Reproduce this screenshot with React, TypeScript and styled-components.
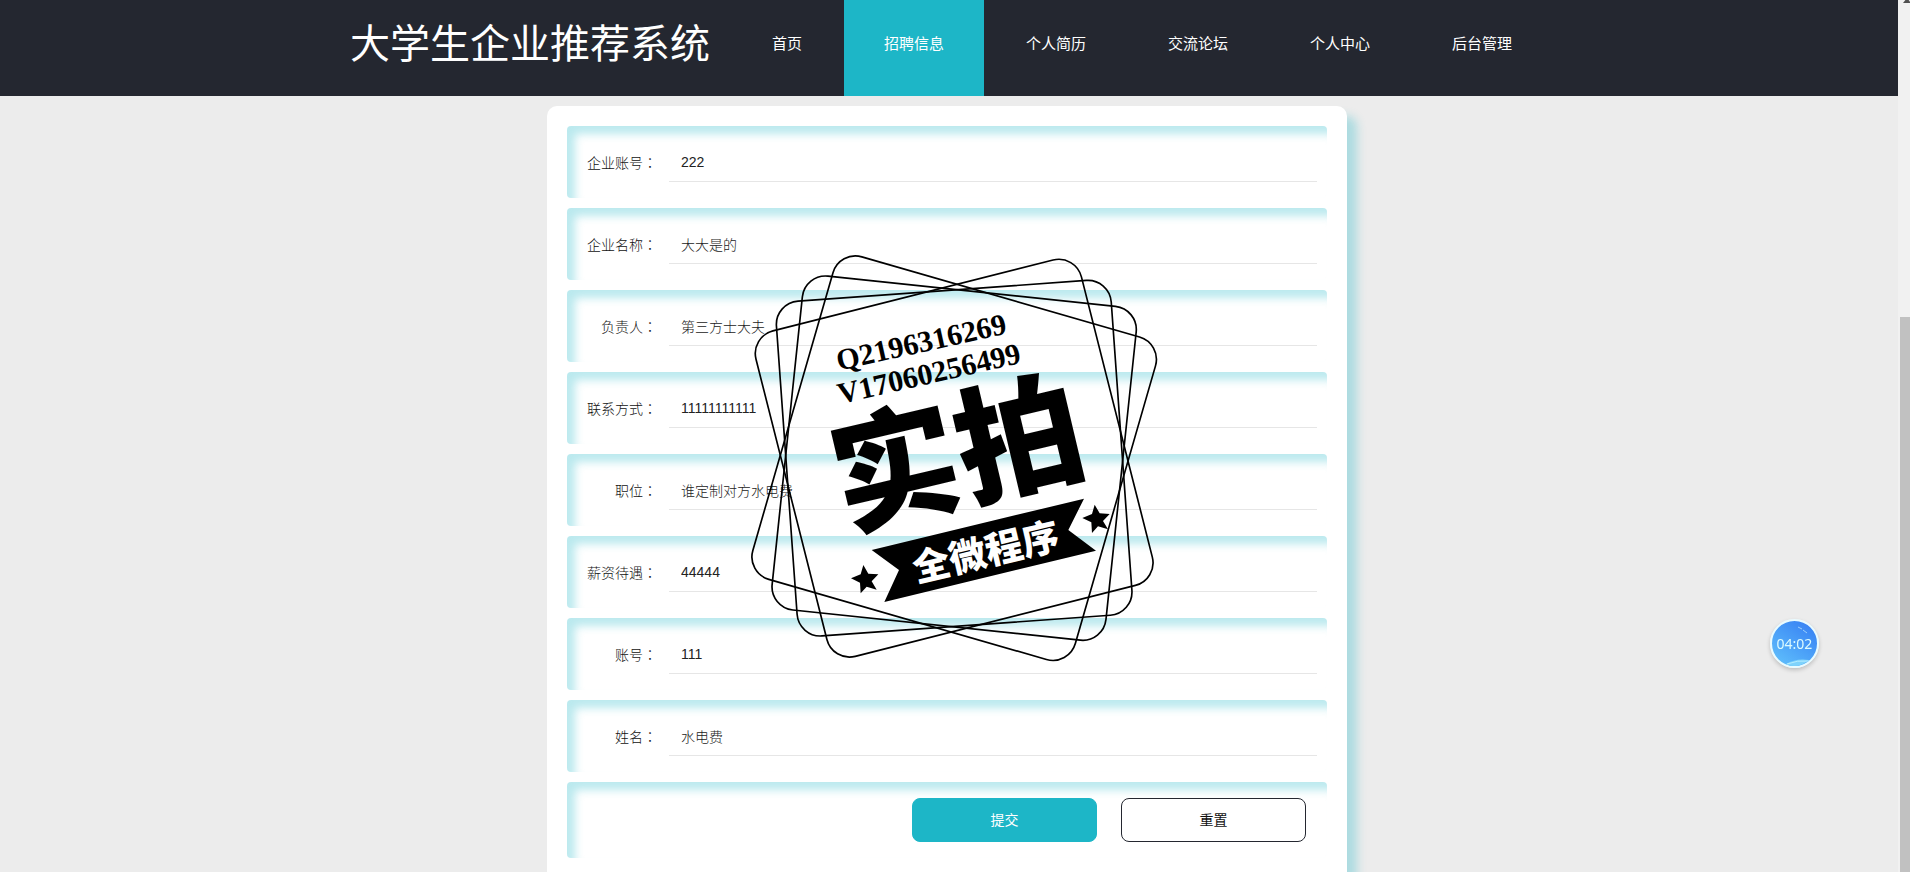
import React from 'react';
import styled, { createGlobalStyle } from 'styled-components';

const teal = '#1db6c7';
const tealShade = 'rgba(29, 182, 199, 0.3)';
const fontStack = '"Liberation Sans", "Noto Sans CJK SC", sans-serif';

const GlobalStyle = createGlobalStyle`
  * { box-sizing: border-box; }
  body {
    margin: 0;
    background: #ececec;
    color: #222;
    font: 14px/20px ${fontStack};
  }
`;

const Page = styled.div`
  display: grid;
  grid-template-columns: minmax(0, 1fr) 12px;
  height: 100vh;
  overflow: hidden;
`;

const Content = styled.div`
  min-width: 0;
`;

const Header = styled.header`
  display: flex;
  justify-content: center;
  height: 96px;
  background: #242730;
`;

const HeaderInner = styled.div`
  display: flex;
  gap: 22px;
  width: 100%;
  max-width: 1198px;
`;

const Title = styled.h1`
  margin: 0;
  color: #fff;
  font-size: 40px;
  font-weight: 400;
  line-height: 88px;
  white-space: nowrap;
`;

const Nav = styled.nav`
  display: flex;
  gap: 2px;
`;

const NavLink = styled.a<{ $active?: boolean }>`
  padding: 0 40px;
  background: ${({ $active }) => ($active ? teal : 'transparent')};
  color: #fff;
  font-size: 15px;
  line-height: 88px;
  text-decoration: none;
  white-space: nowrap;
`;

const Main = styled.main`
  display: flex;
  justify-content: center;
  padding: 10px 4px 40px 0;
`;

const Card = styled.form`
  position: relative;
  display: flex;
  flex-direction: column;
  gap: 10px;
  width: 100%;
  max-width: 800px;
  padding: 20px 20px 40px;
  border-radius: 10px;
  background: #fff;
  box-shadow: 10px 10px 10px ${tealShade};
`;

const Row = styled.div`
  display: flex;
  align-items: center;
  gap: 12px;
  padding: 16px 10px;
  border-radius: 4px;
  box-shadow: inset 8px 8px 8px ${tealShade};
`;

const ButtonRow = styled(Row)`
  justify-content: flex-end;
  gap: 24px;
  padding: 16px 21px;
`;

const Label = styled.label`
  flex: 0 0 80px;
  color: #111;
  font-weight: 300;
  line-height: 18px;
  text-align: right;
`;

const Colon = styled.span`
  font-family: "Noto Sans CJK TC", sans-serif;
`;

const Input = styled.input`
  flex: 1;
  min-width: 0;
  height: 40px;
  padding: 0 12px;
  border: 0;
  border-bottom: 1px solid #e6e6e6;
  outline: 0;
  background: transparent;
  color: #222;
  font: 300 14px/20px ${fontStack};
`;

const Button = styled.button<{ $primary?: boolean }>`
  width: 185px;
  height: 44px;
  border: 1px solid ${({ $primary }) => ($primary ? teal : '#242730')};
  border-radius: 8px;
  background: ${({ $primary }) => ($primary ? teal : '#fff')};
  color: ${({ $primary }) => ($primary ? '#fff' : '#111')};
  font: 14px/20px ${fontStack};
`;

const Stamp = styled.svg`
  position: absolute;
  top: 134px;
  left: 193px;
  width: 430px;
  height: 430px;
  pointer-events: none;
`;

const Timer = styled.div`
  position: fixed;
  right: 91px;
  bottom: 204px;
  display: flex;
  align-items: center;
  justify-content: center;
  width: 49px;
  height: 49px;
  border: 2px solid #e9fbff;
  border-radius: 50%;
  background: linear-gradient(215deg, #3a86f4 15%, #5bb9fb 85%);
  box-shadow: 0 2px 4px rgba(0, 0, 0, 0.2);
  color: #dcfbff;
  font: 14px/20px "Noto Sans", sans-serif;
`;

const Glint = styled.svg`
  position: absolute;
  inset: 0;
  width: 45px;
  height: 45px;
`;

const TimerText = styled.span`
  position: relative;
`;

const ScrollTrack = styled.div`
  display: flex;
  flex-direction: column;
  justify-content: space-between;
  padding-left: 2px;
  background: #f1f1f1;
`;

const ScrollArrow = styled.svg`
  width: 10px;
  height: 4px;
`;

const ScrollThumb = styled.div`
  height: calc(100% - 317px);
  background: #c1c1c1;
`;

const links = ['首页', '招聘信息', '个人简历', '交流论坛', '个人中心', '后台管理'];

const fields = [
  { id: 'account', label: '企业账号', value: '222' },
  { id: 'company', label: '企业名称', value: '大大是的' },
  { id: 'owner', label: '负责人', value: '第三方士大夫' },
  { id: 'contact', label: '联系方式', value: '11111111111' },
  { id: 'position', label: '职位', value: '谁定制对方水电费' },
  { id: 'salary', label: '薪资待遇', value: '44444' },
  { id: 'user', label: '账号', value: '111' },
  { id: 'name', label: '姓名', value: '水电费' },
];

const frameAngles = [16.1, 6, -4.1, -14.2];
const star =
  '-3,-43 12,-17 42,-15 22,6 37,31 7,22 -11,42 -13,10 -40,-3 -11,-15';

function StampMark() {
  return (
    <Stamp viewBox="0 0 1290 1290" aria-hidden="true">
      {frameAngles.map((angle) => (
        <rect
          key={angle}
          x="139"
          y="151"
          width="1007"
          height="1007"
          rx="70"
          fill="none"
          stroke="#000"
          strokeWidth="5"
          transform={`rotate(${angle} 642.5 654.5)`}
        />
      ))}
      <g fontFamily='"Liberation Serif", serif' fontWeight="700" fontSize="90">
        <text transform="translate(296 392) rotate(-12.5)">Q2196316269</text>
        <text transform="translate(300 492) rotate(-12.8)">V17060256499</text>
      </g>
      <text
        transform="translate(314 864) rotate(-13.3)"
        fontFamily='"Noto Sans CJK SC", sans-serif'
        fontWeight="900"
        fontSize="380"
      >
        实拍
      </text>
      <polygon points="395,930 1032,776 985,870 1068,932 433,1086 477,990" />
      <text
        transform="translate(737 935) rotate(-13.3)"
        y="41"
        textAnchor="middle"
        fill="#fff"
        fontFamily='"Noto Sans CJK SC", sans-serif'
        fontWeight="900"
        fontSize="112"
      >
        全微程序
      </text>
      <polygon points={star} transform="translate(373 1018)" />
      <polygon points={star} transform="translate(1067 837)" />
    </Stamp>
  );
}

export default function App() {
  return (
    <>
      <GlobalStyle />
      <Page lang="zh-CN">
        <Content>
          <Header>
            <HeaderInner>
              <Title>大学生企业推荐系统</Title>
              <Nav>
                {links.map((text) => (
                  <NavLink key={text} href="#" $active={text === '招聘信息'}>
                    {text}
                  </NavLink>
                ))}
              </Nav>
            </HeaderInner>
          </Header>
          <Main>
            <Card onSubmit={(e) => e.preventDefault()}>
              {fields.map((field) => (
                <Row key={field.id}>
                  <Label htmlFor={field.id}>
                    {field.label}
                    <Colon lang="zh-TW">：</Colon>
                  </Label>
                  <Input id={field.id} defaultValue={field.value} />
                </Row>
              ))}
              <ButtonRow>
                <Button type="submit" $primary>
                  提交
                </Button>
                <Button type="reset">重置</Button>
              </ButtonRow>
              <StampMark />
            </Card>
          </Main>
        </Content>
        <ScrollTrack>
          <ScrollArrow viewBox="0 0 10 4">
            <path d="M3 3 L7 -2 L11 3 Z" fill="#505050" />
          </ScrollArrow>
          <ScrollThumb />
        </ScrollTrack>
      </Page>
      <Timer>
        <Glint viewBox="0 0 45 45" fill="none">
          <path d="M14 43 Q24 37 37 39 Q30 45 22 45 Q17 45 14 43Z" fill="#7fd3fb" />
          <path d="M15 43 Q25 39 37 40" stroke="#b5ecff" />
          <path d="M26 6 L30 8 M31 9 L35 12" stroke="#9bd0fb" />
        </Glint>
        <TimerText>04:02</TimerText>
      </Timer>
    </>
  );
}
